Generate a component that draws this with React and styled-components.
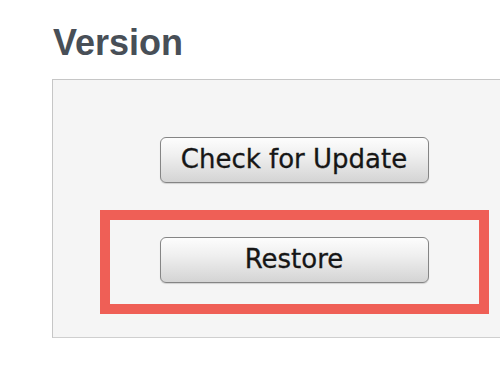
import React from 'react'
import styled, { createGlobalStyle } from 'styled-components'

const GlobalStyle = createGlobalStyle`
    html, body{
        margin: 0;
        padding: 0;
        background: #ffffff;
        overflow: hidden;
    }
`

const Page = styled.main`
    width: 500px;
    height: 375px;
    padding: 21px 0 0 52px;
    box-sizing: border-box;
    overflow: hidden;
`

const Title = styled.h1`
    margin: 0 0 15px 1px;
    font-family: 'Liberation Sans', Arial, sans-serif;
    font-weight: 700;
    font-size: 36px;
    line-height: 43px;
    color: #484f57;
`

const Panel = styled.section`
    width: 484px;
    height: 259px;
    box-sizing: border-box;
    background: #f5f5f5;
    border: 1px solid #c6c6c6;
    border-bottom-color: #cfcfcf;
    padding-top: 57px;
    display: flex;
    flex-direction: column;
    align-items: center;
`

const Highlight = styled.div`
    margin-top: 27px;
    width: 389px;
    height: 104px;
    box-sizing: border-box;
    border: 10px solid #ef5f56;
    display: flex;
    justify-content: center;
    padding-top: 17px;
`

const Button = styled.button`
    width: 269px;
    height: 46px;
    box-sizing: border-box;
    border: 1px solid #858585;
    border-radius: 6px;
    background: linear-gradient(#fdfdfd 0%, #efefef 40%, #d4d4d4 100%);
    box-shadow: 0 1px 1px rgba(0, 0, 0, 0.15);
    font-family: 'DejaVu Sans', Verdana, sans-serif;
    font-size: 26px;
    color: #161616;
    -webkit-text-stroke: 0.3px #161616;
    padding: 0 0 2px;
    cursor: pointer;
`

export default function App(){
    return (
        <>
        <GlobalStyle />
        <Page>
            <Title>Version</Title>
            <Panel>
                <Button>Check for Update</Button>
                <Highlight>
                    <Button>Restore</Button>
                </Highlight>
            </Panel>
        </Page>
        </>
    )
}
